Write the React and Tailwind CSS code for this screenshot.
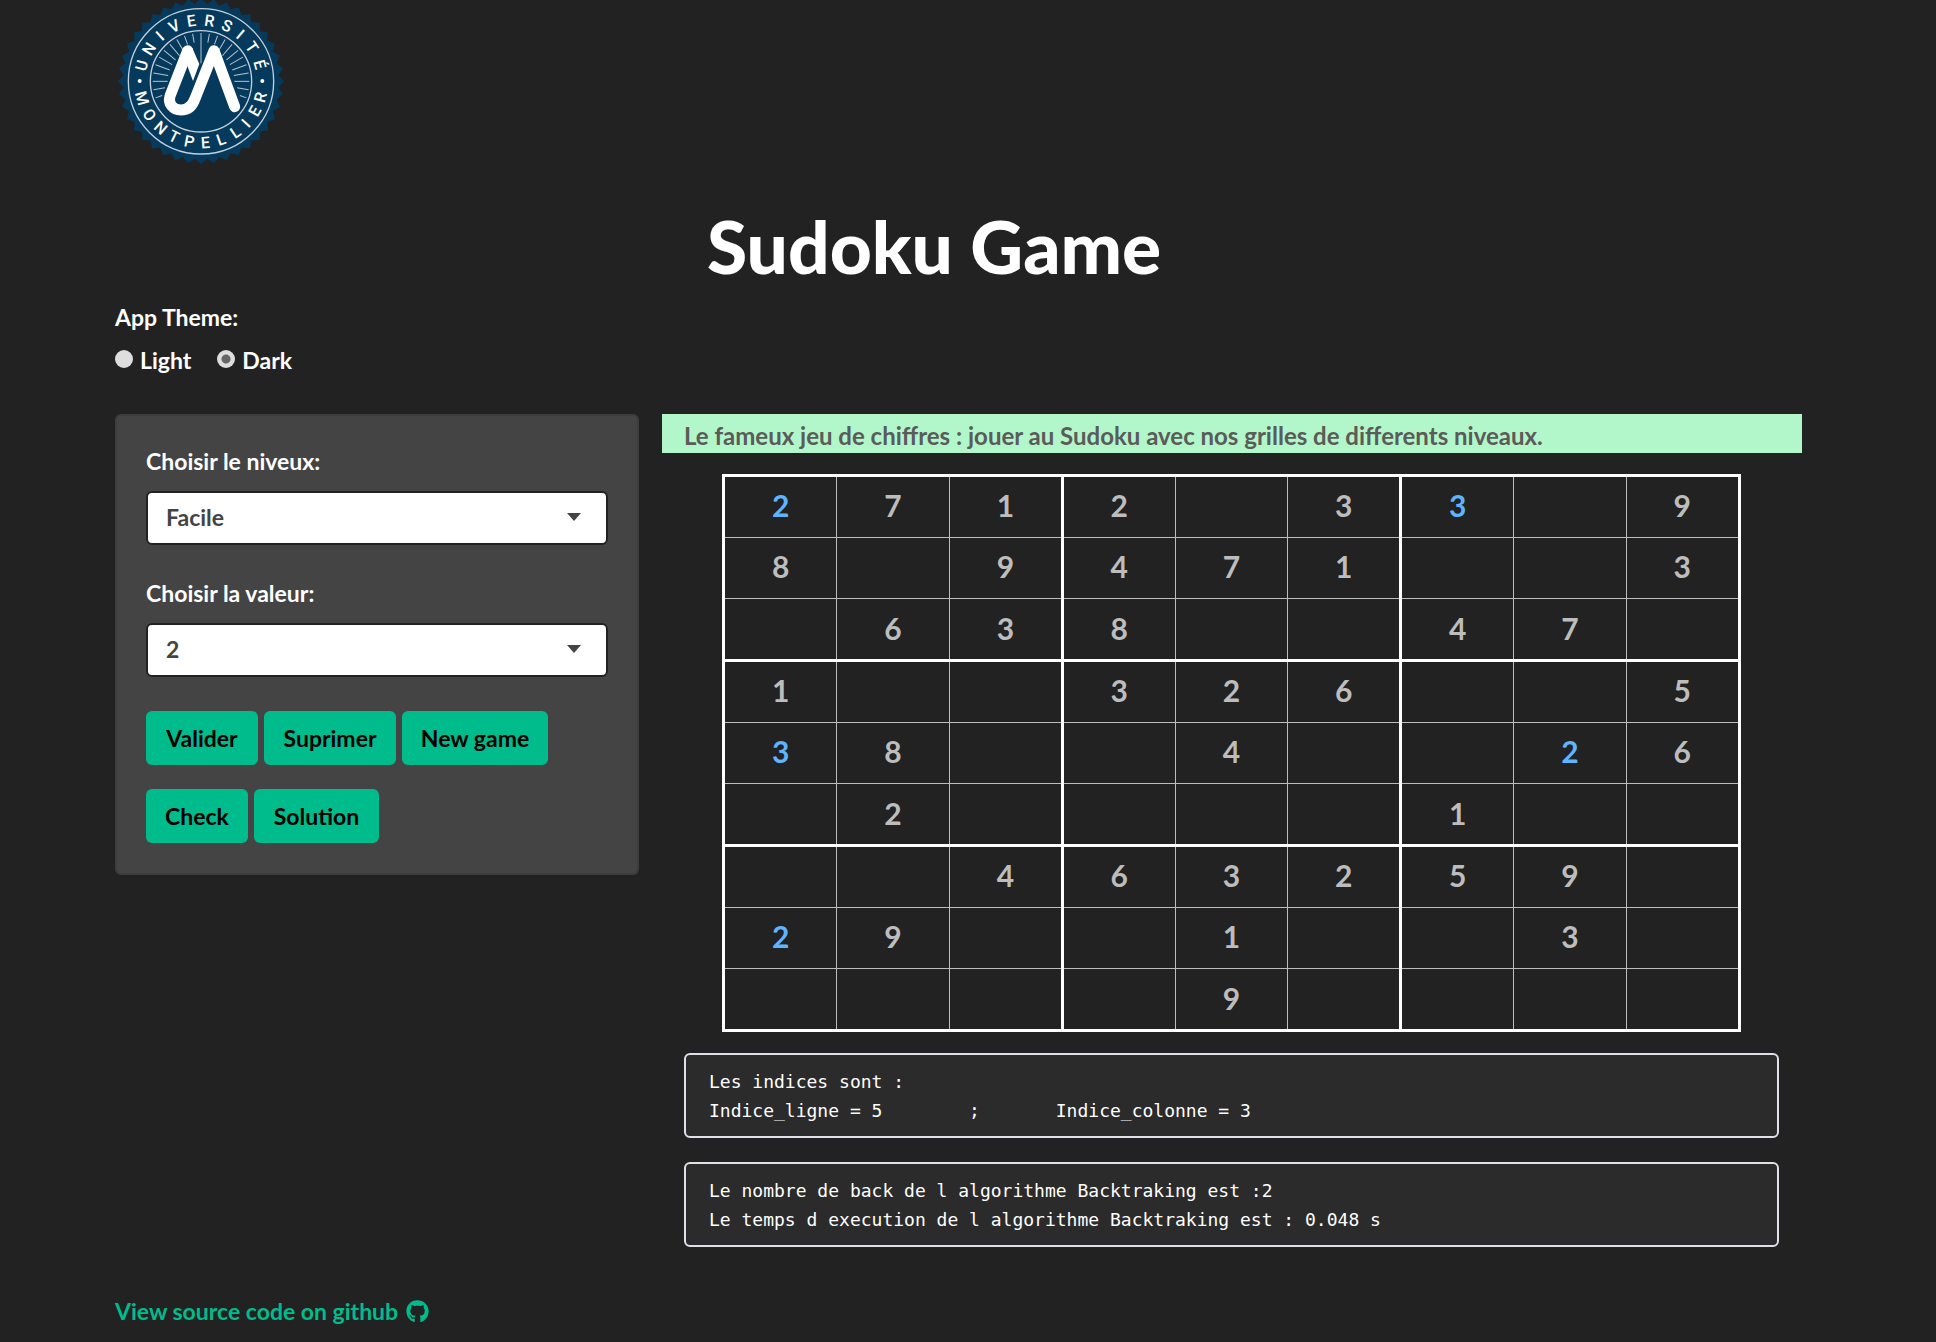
import React, { useState } from "react";
import { FaGithub } from "react-icons/fa";

const GRID = [
  "271203309",
  "809471003",
  "063800470",
  "100326005",
  "380040026",
  "020000100",
  "004632590",
  "290010030",
  "000090000",
];
const PLAYED = new Set(["0-0", "0-6", "4-0", "4-7", "7-0"]);

const TOP_LETTERS = [
  ["U", -75], ["N", -58], ["I", -42], ["V", -26], ["E", -9],
  ["R", 8], ["S", 25], ["I", 40], ["T", 56], ["É", 74],
];
const BOTTOM_LETTERS = [
  ["M", 74], ["O", 57], ["N", 41], ["T", 26], ["P", 11], ["E", -4],
  ["L", -19], ["L", -34], ["I", -47], ["E", -61], ["R", -75],
];
const RAYS = Array.from({ length: 23 }, (_, i) => (i - 11) * 10);

const crest = Array.from({ length: 80 }, (_, i) => {
  const a = (i * Math.PI) / 40;
  const r = i % 2 ? 233 : 249;
  return `${(302 + r * Math.sin(a)).toFixed(1)},${(244 - r * Math.cos(a)).toFixed(1)}`;
}).join(" ");

function Logo() {
  return (
    <svg
      viewBox="53 0 498 510"
      className="h-[170px] w-[166px]"
      role="img"
      aria-label="Université Montpellier"
    >
      <polygon points={crest} fill="#053a5c" />
      <g fill="none" stroke="#c3d0da" strokeWidth="4">
        <circle cx="302" cy="244" r="218" />
        <circle cx="302" cy="244" r="152" />
      </g>
      <g stroke="#b4c4d0" strokeWidth="3">
        {RAYS.map((a) => {
          const abs = Math.abs(a);
          const inner = a === 0 ? 54 : abs <= 20 ? 118 : abs >= 110 ? 124 : abs >= 100 ? 110 : 100;
          return (
            <line
              key={a}
              x1="302"
              x2="302"
              y1="99"
              y2={244 - inner}
              transform={`rotate(${a} 302 244)`}
            />
          );
        })}
      </g>
      <path
        d="M403 320L341 152L284 296C276 319 262 330 242 330C218 330 202 311 209 288L262 152"
        fill="none"
        stroke="#fff"
        strokeWidth="33"
        strokeLinecap="round"
        strokeLinejoin="round"
      />
      <path d="M250 150L276 144L297 192L278 243L262 200Z" fill="#fff" />
      <circle cx="118" cy="243" r="6" fill="#fff" />
      <circle cx="486" cy="243" r="6" fill="#fff" />
      <g
        fill="#fff"
        fontFamily="'Liberation Sans Narrow', Roboto, sans-serif"
        fontWeight="500"
        fontSize="48"
        textAnchor="middle"
      >
        {TOP_LETTERS.map(([c, a]) => (
          <text key={a} x="302" y="77" transform={`rotate(${a} 302 244)`}>{c}</text>
        ))}
        {BOTTOM_LETTERS.map(([c, a]) => (
          <text key={a} x="302" y="445" transform={`rotate(${a} 302 244)`}>{c}</text>
        ))}
      </g>
    </svg>
  );
}

function ThemeOption({ value, label, theme, onChange }) {
  return (
    <label className="flex items-center gap-[7px]">
      <input
        type="radio"
        name="theme"
        value={value}
        checked={theme === value}
        onChange={() => onChange(value)}
        className="mb-[3px] size-[18px] appearance-none rounded-full bg-[#dedede] checked:bg-[radial-gradient(circle,#666_4px,#dedede_5px)]"
      />
      {label}
    </label>
  );
}

function SelectField({ id, label, options, initial }) {
  const [value, setValue] = useState(initial);
  return (
    <div className="flex flex-col gap-[14px]">
      <label htmlFor={id} className="leading-[32px] text-white">{label}</label>
      <div className="relative">
        <select
          id={id}
          value={value}
          onChange={(e) => setValue(e.target.value)}
          className="h-[54px] w-full appearance-none rounded-md border-2 border-[#222] bg-white px-[18px] pb-[2px] text-[#444]"
        >
          {options.map((o) => <option key={o}>{o}</option>)}
        </select>
        <svg viewBox="0 0 14 8" className="pointer-events-none absolute top-[22px] right-[27px] h-2 w-3.5" aria-hidden="true">
          <path d="M0 0H14L7 8Z" fill="#444" />
        </svg>
      </div>
    </div>
  );
}

function Action({ children, width }) {
  return (
    <button type="button" className={`h-[54px] rounded-md bg-[#00bc8c] text-center text-black ${width}`}>
      {children}
    </button>
  );
}

function Board() {
  return (
    <table className="mx-auto h-[558px] w-[93%] table-fixed border-collapse border-3 border-white text-center text-[30px] leading-none text-[#bdbdbd]">
      <tbody>
        {GRID.map((row, r) => (
          <tr key={r} className={r % 3 === 2 ? "border-b-3 border-b-white" : "border-b border-b-[#bdbdbd]"}>
            {[...row].map((n, c) => (
              <td
                key={c}
                className={`h-[58px] pb-[3px] ${c % 3 === 2 ? "border-r-3 border-r-white" : "border-r border-r-[#bdbdbd]"} ${PLAYED.has(`${r}-${c}`) ? "text-[#5fb4ff]" : ""}`}
              >
                {n === "0" ? "" : n}
              </td>
            ))}
          </tr>
        ))}
      </tbody>
    </table>
  );
}

function Output({ children }) {
  return (
    <pre className="rounded-md border-2 border-[#dee2e6] bg-[#2b2b2b] px-[23px] pt-[12px] pb-[11px] font-['DejaVu_Sans_Mono',monospace] text-[18px] leading-[29px] font-normal whitespace-pre-wrap text-white">
      {children}
    </pre>
  );
}

export default function App() {
  const [theme, setTheme] = useState("dark");
  return (
    <div className="min-h-screen bg-[#222] pr-[134px] pb-[14px] pl-[115px] font-['Lato',sans-serif] text-[23px] font-bold text-white">
      <header>
        <div className="pl-[3px]"><Logo /></div>
        <div className="mt-[34px] grid grid-cols-[524fr_1140fr] gap-[23px]">
          <h1 className="col-start-2 pl-[45px] text-[73px] leading-[84px] font-black">Sudoku Game</h1>
        </div>
      </header>
      <fieldset className="mt-[13px]">
        <legend className="leading-[32px]">App Theme:</legend>
        <div className="mt-[11px] flex gap-[26px] leading-[32px]">
          <ThemeOption value="light" label="Light" theme={theme} onChange={setTheme} />
          <ThemeOption value="dark" label="Dark" theme={theme} onChange={setTheme} />
        </div>
      </fieldset>
      <main className="mt-[38px] grid grid-cols-[524fr_1140fr] items-start gap-[23px]">
        <form className="rounded-md border-2 border-[#3d3d3d] bg-[#444] px-[29px] pt-[29px] pb-[30px]">
          <div className="flex flex-col gap-[32px]">
            <SelectField id="level" label="Choisir le niveux:" options={["Facile", "Moyen", "Difficile"]} initial="Facile" />
            <SelectField id="value" label="Choisir la valeur:" options={["1", "2", "3", "4", "5", "6", "7", "8", "9"]} initial="2" />
          </div>
          <div className="mt-[34px] flex gap-[6px]">
            <Action width="w-[112px]">Valider</Action>
            <Action width="w-[132px]">Suprimer</Action>
            <Action width="w-[146px]">New game</Action>
          </div>
          <div className="mt-6 flex gap-[6px]">
            <Action width="w-[102px]">Check</Action>
            <Action width="w-[125px]">Solution</Action>
          </div>
        </form>
        <section>
          <p className="bg-[#b2f7c9] px-[22px] pt-[6px] pb-[1px] text-[24px] leading-[32px] text-[#5b5b5b]">
            Le fameux jeu de chiffres : jouer au Sudoku avec nos grilles de differents niveaux.
          </p>
          <div className="mt-[21px] flex flex-col gap-[21px] pr-[23px] pl-[22px]">
            <Board />
            <div className="flex flex-col gap-6">
              <Output>{"Les indices sont :\nIndice_ligne = 5        ;       Indice_colonne = 3"}</Output>
              <Output>{"Le nombre de back de l algorithme Backtraking est :2\nLe temps d execution de l algorithme Backtraking est : 0.048 s"}</Output>
            </div>
          </div>
        </section>
      </main>
      <footer className="mt-[47px]">
        <a href="#source" className="inline-flex items-center gap-[8px] leading-[32px] text-[#00bc8c]">
          View source code on github <FaGithub className="size-[23px]" aria-hidden="true" />
        </a>
      </footer>
    </div>
  );
}
